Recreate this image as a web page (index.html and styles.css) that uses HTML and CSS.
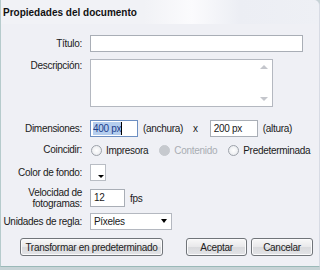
FILE: index.html
```html
<!DOCTYPE html>
<html lang="es">
<head>
    <meta charset="UTF-8">
    <title>Propiedades del documento</title>
    <link rel="stylesheet" href="styles.css">
</head>
<body>
    <div class="dialog">
        <div class="title-bar">Propiedades del documento</div>

        <div class="row r-title">
            <label class="lbl">Título:</label>
            <div class="txt wide"></div>
        </div>

        <div class="row r-desc">
            <label class="lbl">Descripción:</label>
            <div class="area">
                <span class="arrow up"></span>
                <span class="arrow down"></span>
            </div>
        </div>

        <div class="row r-dim">
            <label class="lbl">Dimensiones:</label>
            <div class="line">
                <div class="txt small active"><span class="sel">400 px</span><span class="caret"></span></div>
                <span class="unit">(anchura)</span>
                <span class="times">x</span>
                <div class="txt small">200 px</div>
                <span class="unit">(altura)</span>
            </div>
        </div>

        <div class="row r-match">
            <label class="lbl">Coincidir:</label>
            <div class="line">
                <span class="radio"></span><span class="opt">Impresora</span>
                <span class="radio off"></span><span class="opt off">Contenido</span>
                <span class="radio"></span><span class="opt">Predeterminada</span>
            </div>
        </div>

        <div class="row r-color">
            <label class="lbl">Color de fondo:</label>
            <div class="swatch"><span class="tri"></span></div>
        </div>

        <div class="row r-fps">
            <label class="lbl">Velocidad de<br>fotogramas:</label>
            <div class="line">
                <div class="txt fps">12</div>
                <span class="unit">fps</span>
            </div>
        </div>

        <div class="row r-units">
            <label class="lbl">Unidades de regla:</label>
            <div class="select">Píxeles<span class="tri"></span></div>
        </div>

        <div class="buttons">
            <button class="btn reset">Transformar en predeterminado</button>
            <button class="btn ok">Aceptar</button>
            <button class="btn cancel">Cancelar</button>
        </div>
    </div>
</body>
</html>
```

FILE: styles.css
```css
body {
    margin: 0;
    background-color: #c7d3d6;
    font-family: "Liberation Sans", Arial, sans-serif;
    font-size: 10px;
    letter-spacing: -0.3px;
    color: #1a1a1a;
}
.dialog {
    width: 320px;
    height: 267px;
    background-color: #eff0f5;
    border-left: 1px solid #b6cbcc;
    border-bottom: 1px solid #9ab9b8;
    border-right: 1px solid #d7dbe4;
    border-top-right-radius: 6px;
    box-sizing: border-box;
    overflow: hidden;
}
.title-bar {
    height: 24px;
    line-height: 25px;
    padding-left: 2px;
    font-weight: bold;
    font-size: 10px;
    letter-spacing: 0;
    color: #111;
    background: linear-gradient(to right, #f1f2f6 0%, #f1f2f6 45%, #fbfbfd 60%, #eceef4 75%, #eef0f5 100%);
}
.row {
    display: grid;
    grid-template-columns: 81px 1fr;
    column-gap: 8px;
    align-items: center;
}
.lbl {
    text-align: right;
    line-height: 12px;
    white-space: nowrap;
}
.r-title { margin-top: 11px; height: 17px; }
.r-desc { margin-top: 7px; height: 48px; align-items: start; }
.r-desc .lbl { padding-top: 1px; }
.r-dim { margin-top: 13px; height: 17px; }
.r-match { margin-top: 5px; height: 16px; }
.r-color { margin-top: 6px; height: 17px; }
.r-fps { margin-top: 6px; height: 22px; }
.r-fps .lbl { line-height: 11px; }
.r-units { margin-top: 4px; height: 17px; }

.txt {
    box-sizing: border-box;
    height: 17px;
    border: 1px solid #a9aeb6;
    background: #fff;
    padding: 0 3px;
    line-height: 15px;
}
.wide {
    width: 213px;
}
.area {
    position: relative;
    box-sizing: border-box;
    width: 183px;
    height: 48px;
    background: #fff;
    border: 1px solid #b4b8c0;
}
.arrow {
    position: absolute;
    right: 4px;
    width: 0;
    height: 0;
    border-left: 4px solid transparent;
    border-right: 4px solid transparent;
}
.arrow.up {
    top: 5px;
    border-bottom: 4px solid #c4c6cc;
}
.arrow.down {
    bottom: 5px;
    border-top: 4px solid #c4c6cc;
}
.line {
    display: flex;
    align-items: center;
    white-space: nowrap;
}
.small {
    width: 48px;
}
.active {
    border-color: #6d8fc2;
    display: flex;
    align-items: center;
    padding-left: 2px;
}
.sel {
    background: #b4cdee;
    color: #1d3e8c;
    line-height: 13px;
}
.caret {
    width: 1px;
    height: 13px;
    background: #000;
}
.unit {
    margin-left: 5px;
}
.times {
    margin: 0 12px 0 10px;
}
.radio {
    box-sizing: border-box;
    width: 11px;
    height: 11px;
    border: 1px solid #9da2aa;
    border-radius: 50%;
    background: radial-gradient(#ffffff, #e4e6ea);
    margin: 0 4px 0 1px;
}
.radio.off {
    background: #c6c9ce;
    border-color: #c6c9ce;
}
.opt {
    margin-right: 10px;
}
.opt.off {
    color: #a9adb3;
    margin-right: 10px;
}
.swatch {
    position: relative;
    box-sizing: border-box;
    width: 16px;
    height: 17px;
    background: #fff;
    border: 1px solid #b9bdc4;
}
.swatch .tri {
    position: absolute;
    right: 1px;
    bottom: 2px;
    border-left: 3px solid transparent;
    border-right: 3px solid transparent;
    border-top: 3px solid #000;
}
.fps {
    width: 35px;
    height: 18px;
    line-height: 16px;
}
.select {
    position: relative;
    box-sizing: border-box;
    width: 82px;
    height: 17px;
    padding-left: 3px;
    line-height: 15px;
    background: #fff;
    border: 1px solid #b4b8c0;
}
.select .tri {
    position: absolute;
    right: 4px;
    top: 5px;
    border-left: 3px solid transparent;
    border-right: 3px solid transparent;
    border-top: 4px solid #000;
}
.buttons {
    display: flex;
    margin-top: 8px;
    padding-left: 19px;
}
.btn {
    box-sizing: border-box;
    height: 18px;
    padding: 0;
    font: inherit;
    letter-spacing: inherit;
    white-space: nowrap;
    color: #222;
    border: 1px solid #707479;
    border-radius: 3px;
    background: linear-gradient(#f8f8f8 0%, #e8e8ea 50%, #d9dadd 51%, #e3e4e7 100%);
    box-shadow: inset 0 0 0 1px #fbfbfc;
}
.reset {
    width: 143px;
}
.ok {
    width: 61px;
    margin-left: 23px;
}
.cancel {
    width: 62px;
    margin-left: 4px;
}
```
